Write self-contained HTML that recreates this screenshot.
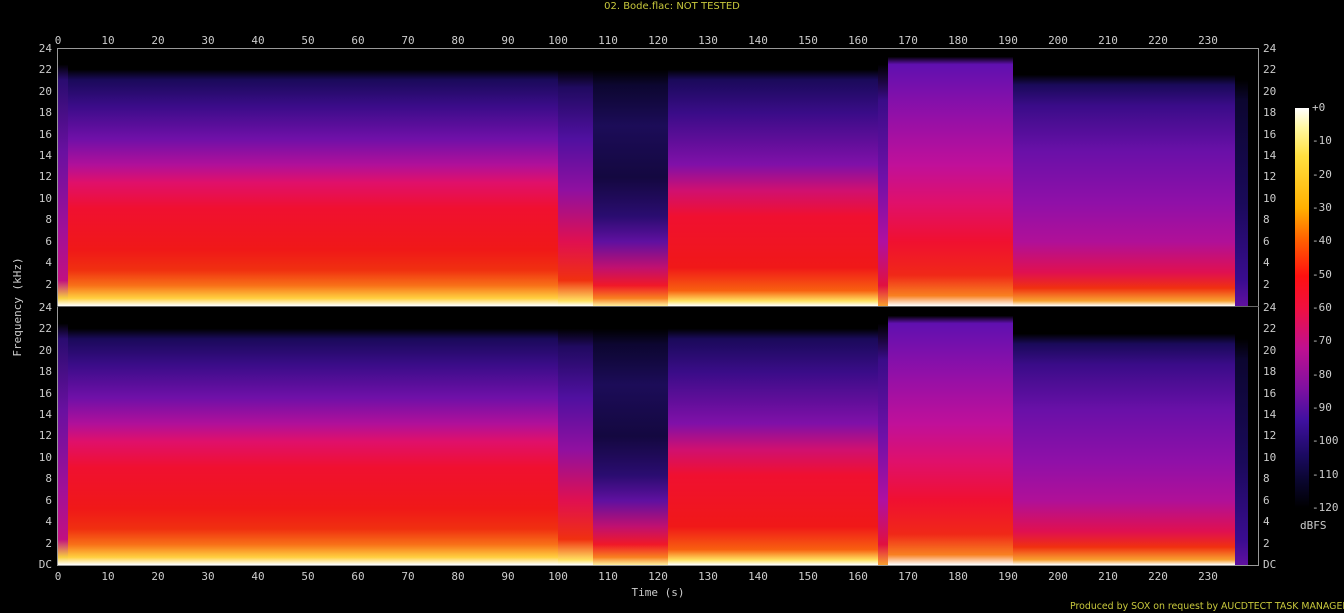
<!DOCTYPE html>
<html><head><meta charset="utf-8"><style>
html,body{margin:0;padding:0;background:#000;width:1344px;height:613px;overflow:hidden;position:relative;font-family:"DejaVu Sans Mono","Liberation Mono",monospace;}
.t{position:absolute;color:#ccc;font-size:11px;line-height:14px;white-space:nowrap}
.xc{transform:translateX(-50%)}
.rl{text-align:right;width:30px}
.ch{position:absolute;left:58px;width:1200px;height:257px;background:#000;overflow:hidden}
.s{position:absolute;top:0;height:100%}
.a{left:0;width:10px;background:linear-gradient(#000 0,#000 6%,#2a0c70 12%,#6a10a0 40%,#a01098 70%,#c01080 90%,#f8d040 97%,#fff 100%)}
.b{left:10px;width:490px;background:linear-gradient(#000 0,#000 8%,#1a0a5a 12%,#3a0c88 22%,#7010a8 35%,#b0109a 45%,#e0106a 52%,#f01030 62%,#f01818 78%,#f03010 86%,#f87018 92%,#ffd040 97%,#fff 100%)}
.c{left:500px;width:35px;background:linear-gradient(#000 0,#000 8%,#200a60 15%,#5010a0 35%,#9010a0 55%,#e01050 75%,#f03010 90%,#ffe060 98%,#fff 100%)}
.d{left:535px;width:75px;background:linear-gradient(#000 0,#000 8%,#0c0630 14%,#1c0c58 30%,#140840 50%,#2a0c70 65%,#6010a0 75%,#c01070 85%,#f01828 92%,#f88020 97%,#fff0a0 100%)}
.e{left:610px;width:210px;background:linear-gradient(#000 0,#000 8%,#1a0a5a 12%,#3a0c88 25%,#8010a8 45%,#d01070 55%,#f01030 65%,#f01818 85%,#f86010 94%,#ffe060 98%,#fff 100%)}
.f{left:820px;width:10px;background:linear-gradient(#000 0,#000 6%,#3a0c88 20%,#7010a8 50%,#b010a0 75%,#e01040 92%,#f8a030 100%)}
.g{left:830px;width:125px;background:linear-gradient(#000 0,#000 3%,#6010b0 6%,#9010a8 25%,#c0109a 45%,#e0106a 60%,#f01030 75%,#f02818 88%,#f88020 96%,#fff 100%)}
.h{left:955px;width:222px;background:linear-gradient(#000 0,#000 10%,#1a0a5a 14%,#3a0c88 22%,#6a10a8 40%,#9010a8 60%,#b01098 75%,#e01050 87%,#f03010 93%,#f8a030 98%,#fff 100%)}
.i{left:1177px;width:13px;background:linear-gradient(#000 0,#000 12%,#0c0630 20%,#1a0a5a 60%,#3a0c90 90%,#6010a0 100%)}
.ln{position:absolute;background:#999}
.cb{position:absolute;left:1295px;top:108px;width:14px;height:400px;background:linear-gradient(#fff 0%,#fff8a0 5%,#ffe040 12%,#ffb000 25%,#ff6000 33%,#ff1010 42%,#f01040 50%,#c01090 60%,#8010a0 70%,#4010a0 78%,#1a0a60 87%,#0a0630 93%,#000 100%)}
</style></head><body>
<div class="t xc" style="left:672px;top:0;color:#c8c83c;font-family:'DejaVu Sans','Liberation Sans',sans-serif;font-size:10px">02. Bode.flac: NOT TESTED</div>

<div class="ch" style="top:49px"><div class="s a"></div><div class="s b"></div><div class="s c"></div><div class="s d"></div><div class="s e"></div><div class="s f"></div><div class="s g"></div><div class="s h"></div><div class="s i"></div></div>
<div class="ch" style="top:308px"><div class="s a"></div><div class="s b"></div><div class="s c"></div><div class="s d"></div><div class="s e"></div><div class="s f"></div><div class="s g"></div><div class="s h"></div><div class="s i"></div></div>

<div class="ln" style="left:57px;top:48px;width:1202px;height:1px"></div>
<div class="ln" style="left:57px;top:565px;width:1202px;height:1px"></div>
<div class="ln" style="left:57px;top:48px;width:1px;height:518px"></div>
<div class="ln" style="left:1258px;top:48px;width:1px;height:518px"></div>
<div class="ln" style="left:57px;top:306px;width:1202px;height:1px;background:#666"></div>

<div class="t xc" style="left:58px;top:34px">0</div><div class="t xc" style="left:108px;top:34px">10</div><div class="t xc" style="left:158px;top:34px">20</div><div class="t xc" style="left:208px;top:34px">30</div><div class="t xc" style="left:258px;top:34px">40</div><div class="t xc" style="left:308px;top:34px">50</div><div class="t xc" style="left:358px;top:34px">60</div><div class="t xc" style="left:408px;top:34px">70</div><div class="t xc" style="left:458px;top:34px">80</div><div class="t xc" style="left:508px;top:34px">90</div><div class="t xc" style="left:558px;top:34px">100</div><div class="t xc" style="left:608px;top:34px">110</div><div class="t xc" style="left:658px;top:34px">120</div><div class="t xc" style="left:708px;top:34px">130</div><div class="t xc" style="left:758px;top:34px">140</div><div class="t xc" style="left:808px;top:34px">150</div><div class="t xc" style="left:858px;top:34px">160</div><div class="t xc" style="left:908px;top:34px">170</div><div class="t xc" style="left:958px;top:34px">180</div><div class="t xc" style="left:1008px;top:34px">190</div><div class="t xc" style="left:1058px;top:34px">200</div><div class="t xc" style="left:1108px;top:34px">210</div><div class="t xc" style="left:1158px;top:34px">220</div><div class="t xc" style="left:1208px;top:34px">230</div>

<div class="t xc" style="left:58px;top:570px">0</div><div class="t xc" style="left:108px;top:570px">10</div><div class="t xc" style="left:158px;top:570px">20</div><div class="t xc" style="left:208px;top:570px">30</div><div class="t xc" style="left:258px;top:570px">40</div><div class="t xc" style="left:308px;top:570px">50</div><div class="t xc" style="left:358px;top:570px">60</div><div class="t xc" style="left:408px;top:570px">70</div><div class="t xc" style="left:458px;top:570px">80</div><div class="t xc" style="left:508px;top:570px">90</div><div class="t xc" style="left:558px;top:570px">100</div><div class="t xc" style="left:608px;top:570px">110</div><div class="t xc" style="left:658px;top:570px">120</div><div class="t xc" style="left:708px;top:570px">130</div><div class="t xc" style="left:758px;top:570px">140</div><div class="t xc" style="left:808px;top:570px">150</div><div class="t xc" style="left:858px;top:570px">160</div><div class="t xc" style="left:908px;top:570px">170</div><div class="t xc" style="left:958px;top:570px">180</div><div class="t xc" style="left:1008px;top:570px">190</div><div class="t xc" style="left:1058px;top:570px">200</div><div class="t xc" style="left:1108px;top:570px">210</div><div class="t xc" style="left:1158px;top:570px">220</div><div class="t xc" style="left:1208px;top:570px">230</div>

<div class="t rl" style="left:22px;top:42px">24</div><div class="t rl" style="left:22px;top:63px">22</div><div class="t rl" style="left:22px;top:85px">20</div><div class="t rl" style="left:22px;top:106px">18</div><div class="t rl" style="left:22px;top:128px">16</div><div class="t rl" style="left:22px;top:149px">14</div><div class="t rl" style="left:22px;top:170px">12</div><div class="t rl" style="left:22px;top:192px">10</div><div class="t rl" style="left:22px;top:213px">8</div><div class="t rl" style="left:22px;top:235px">6</div><div class="t rl" style="left:22px;top:256px">4</div><div class="t rl" style="left:22px;top:278px">2</div>
<div class="t rl" style="left:22px;top:301px">24</div><div class="t rl" style="left:22px;top:322px">22</div><div class="t rl" style="left:22px;top:344px">20</div><div class="t rl" style="left:22px;top:365px">18</div><div class="t rl" style="left:22px;top:387px">16</div><div class="t rl" style="left:22px;top:408px">14</div><div class="t rl" style="left:22px;top:429px">12</div><div class="t rl" style="left:22px;top:451px">10</div><div class="t rl" style="left:22px;top:472px">8</div><div class="t rl" style="left:22px;top:494px">6</div><div class="t rl" style="left:22px;top:515px">4</div><div class="t rl" style="left:22px;top:537px">2</div><div class="t rl" style="left:22px;top:558px">DC</div>

<div class="t" style="left:1263px;top:42px">24</div><div class="t" style="left:1263px;top:63px">22</div><div class="t" style="left:1263px;top:85px">20</div><div class="t" style="left:1263px;top:106px">18</div><div class="t" style="left:1263px;top:128px">16</div><div class="t" style="left:1263px;top:149px">14</div><div class="t" style="left:1263px;top:170px">12</div><div class="t" style="left:1263px;top:192px">10</div><div class="t" style="left:1263px;top:213px">8</div><div class="t" style="left:1263px;top:235px">6</div><div class="t" style="left:1263px;top:256px">4</div><div class="t" style="left:1263px;top:278px">2</div>
<div class="t" style="left:1263px;top:301px">24</div><div class="t" style="left:1263px;top:322px">22</div><div class="t" style="left:1263px;top:344px">20</div><div class="t" style="left:1263px;top:365px">18</div><div class="t" style="left:1263px;top:387px">16</div><div class="t" style="left:1263px;top:408px">14</div><div class="t" style="left:1263px;top:429px">12</div><div class="t" style="left:1263px;top:451px">10</div><div class="t" style="left:1263px;top:472px">8</div><div class="t" style="left:1263px;top:494px">6</div><div class="t" style="left:1263px;top:515px">4</div><div class="t" style="left:1263px;top:537px">2</div><div class="t" style="left:1263px;top:558px">DC</div>

<div class="t" style="left:10px;top:307px;transform:translate(-50%,-50%) rotate(-90deg);transform-origin:center;margin-left:8px">Frequency (kHz)</div>
<div class="t xc" style="left:658px;top:586px">Time (s)</div>

<div class="cb"></div>
<div class="t" style="left:1312px;top:101px">+0</div><div class="t" style="left:1312px;top:134px">-10</div><div class="t" style="left:1312px;top:168px">-20</div><div class="t" style="left:1312px;top:201px">-30</div><div class="t" style="left:1312px;top:234px">-40</div><div class="t" style="left:1312px;top:268px">-50</div><div class="t" style="left:1312px;top:301px">-60</div><div class="t" style="left:1312px;top:334px">-70</div><div class="t" style="left:1312px;top:368px">-80</div><div class="t" style="left:1312px;top:401px">-90</div><div class="t" style="left:1312px;top:434px">-100</div><div class="t" style="left:1312px;top:468px">-110</div><div class="t" style="left:1312px;top:501px">-120</div>
<div class="t" style="left:1300px;top:519px">dBFS</div>

<div class="t" style="left:1070px;top:600px;color:#c8c83c;font-family:'DejaVu Sans','Liberation Sans',sans-serif;font-size:9.4px">Produced by SOX on request by AUCDTECT TASK MANAGER</div>
</body></html>
